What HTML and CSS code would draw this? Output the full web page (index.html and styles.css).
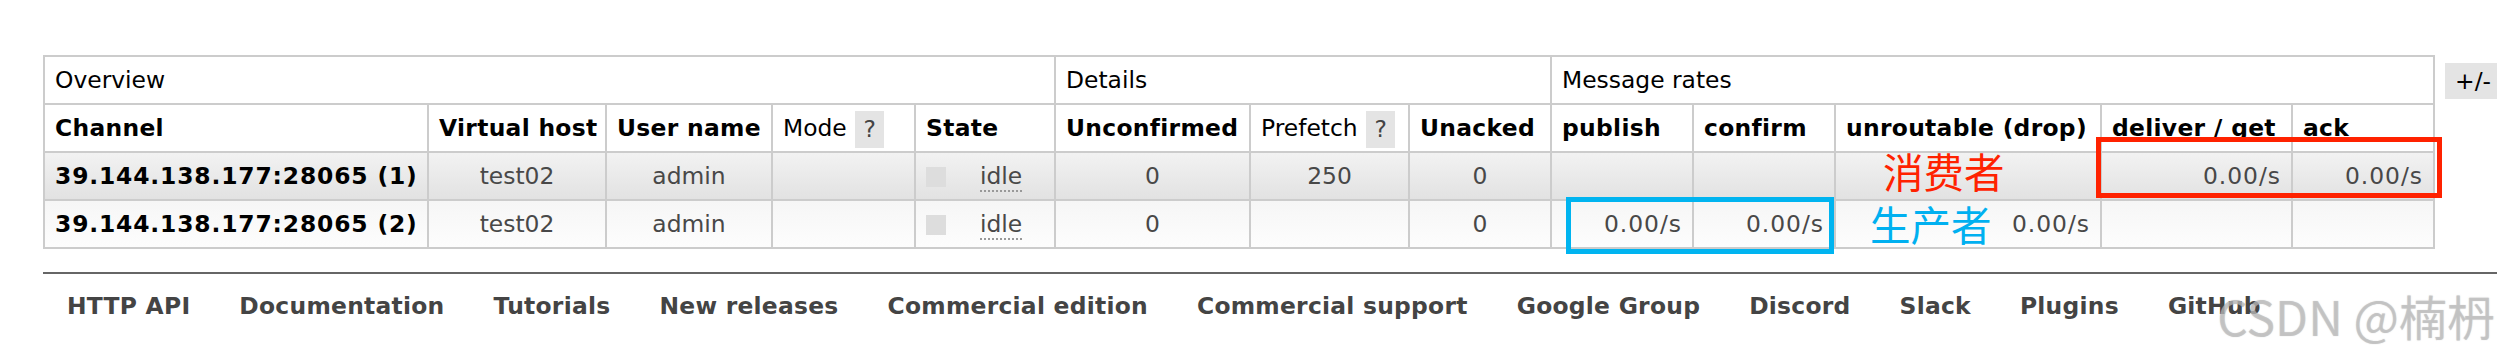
FILE: index.html
```html
<!DOCTYPE html>
<html lang="en">
<head>
    <meta charset="UTF-8">
    <meta name="viewport" content="width=device-width, initial-scale=1.0">
    <title>Channels - RabbitMQ Management</title>
    <link rel="stylesheet" href="styles.css">
</head>
<body>
<div class="page">
    <div class="channels">
        <table class="list">
            <colgroup>
                <col style="width: 384px">
                <col style="width: 178px">
                <col style="width: 166px">
                <col style="width: 143px">
                <col style="width: 140px">
                <col style="width: 195px">
                <col style="width: 159px">
                <col style="width: 142px">
                <col style="width: 142px">
                <col style="width: 142px">
                <col style="width: 266px">
                <col style="width: 191px">
                <col style="width: 142px">
            </colgroup>
            <thead>
                <tr class="group">
                    <th colspan="5">Overview</th>
                    <th colspan="3">Details</th>
                    <th colspan="5">Message rates</th>
                </tr>
                <tr>
                    <th>Channel</th>
                    <th>Virtual host</th>
                    <th>User name</th>
                    <th class="plain">Mode <span class="help">?</span></th>
                    <th>State</th>
                    <th>Unconfirmed</th>
                    <th class="plain">Prefetch <span class="help">?</span></th>
                    <th>Unacked</th>
                    <th>publish</th>
                    <th>confirm</th>
                    <th>unroutable (drop)</th>
                    <th>deliver / get</th>
                    <th>ack</th>
                </tr>
            </thead>
            <tbody>
                <tr class="alt1">
                    <td class="name">39.144.138.177:28065 (1)</td>
                    <td>test02</td>
                    <td>admin</td>
                    <td></td>
                    <td class="state"><span class="square"></span><abbr>idle</abbr></td>
                    <td>0</td>
                    <td>250</td>
                    <td>0</td>
                    <td class="rate"></td>
                    <td class="rate"></td>
                    <td class="rate"></td>
                    <td class="rate">0.00/s</td>
                    <td class="rate">0.00/s</td>
                </tr>
                <tr class="alt2">
                    <td class="name">39.144.138.177:28065 (2)</td>
                    <td>test02</td>
                    <td>admin</td>
                    <td></td>
                    <td class="state"><span class="square"></span><abbr>idle</abbr></td>
                    <td>0</td>
                    <td></td>
                    <td>0</td>
                    <td class="rate">0.00/s</td>
                    <td class="rate">0.00/s</td>
                    <td class="rate">0.00/s</td>
                    <td class="rate"></td>
                    <td class="rate"></td>
                </tr>
            </tbody>
        </table>
        <div class="plus-minus">+/-</div>
    </div>

    <div class="footer">
        <ul>
            <li><a href="#">HTTP API</a></li>
            <li><a href="#">Documentation</a></li>
            <li><a href="#">Tutorials</a></li>
            <li><a href="#">New releases</a></li>
            <li><a href="#">Commercial edition</a></li>
            <li><a href="#">Commercial support</a></li>
            <li><a href="#">Google Group</a></li>
            <li><a href="#">Discord</a></li>
            <li><a href="#">Slack</a></li>
            <li><a href="#">Plugins</a></li>
            <li><a href="#">GitHub</a></li>
        </ul>
    </div>

    <!-- annotations drawn over the screenshot -->
    <div class="mark red"></div>
    <div class="mark blue"></div>
    <div class="note consumer">消费者</div>
    <div class="note producer">生产者</div>
    <div class="watermark">CSDN @楠枬</div>
</div>
</body>
</html>
```

FILE: styles.css
```css
body {
    margin: 0;
    font-family: "DejaVu Sans", Verdana, sans-serif;
    font-size: 23.4px;
    color: #484848;
    background: #ffffff;
}
.page {
    position: relative;
    width: 2497px;
    height: 360px;
    padding-top: 55px;
    box-sizing: border-box;
    overflow: hidden;
}
.channels {
    display: flex;
    align-items: flex-start;
    gap: 10px;
    padding-left: 43px;
}
table.list {
    flex-shrink: 0;
    border-collapse: collapse;
    table-layout: fixed;
    width: 2392px;
}
table.list th,
table.list td {
    border: 2px solid #cccccc;
    padding: 9px 10px;
    line-height: 28px;
    white-space: nowrap;
}
table.list th {
    text-align: left;
    font-weight: bold;
    letter-spacing: 0.3px;
    color: #000000;
    background: #ffffff;
}
table.list tr.group th,
table.list th.plain {
    font-weight: normal;
    letter-spacing: 0;
}
table.list td {
    text-align: center;
}
table.list td.name {
    text-align: left;
    font-weight: bold;
    letter-spacing: 0.85px;
    color: #000000;
}
table.list td.rate {
    text-align: right;
    letter-spacing: 1px;
}
table.list td.state { text-align: left; }
table.list tr.alt1 td { background: linear-gradient(#f2f2f2, #e2e2e2); }
table.list tr.alt2 td { background: linear-gradient(#f6f6f6, #fdfdfd); }

.help {
    display: inline-block;
    width: 29px;
    height: 37px;
    line-height: 37px;
    margin: -6px 0 -6px 1px;
    vertical-align: middle;
    text-align: center;
    background: #e4e4e4;
    color: #444444;
}
.square {
    display: inline-block;
    width: 20px;
    height: 20px;
    background: #dddddd;
    vertical-align: -3px;
}
td.state abbr {
    margin-left: 34px;
    text-decoration: none;
    border-bottom: 2px dotted #999999;
}
.plus-minus {
    flex-shrink: 0;
    margin-top: 8px;
    padding: 0 10px;
    line-height: 36px;
    background: #e4e4e4;
    color: #000000;
}

.footer {
    margin: 23px 0 0 43px;
    border-top: 2px solid #666666;
    padding: 18px 0 0 24px;
}
.footer ul {
    display: flex;
    gap: 49px;
    list-style: none;
    margin: 0;
    padding: 0;
}
.footer a {
    color: #444444;
    font-weight: bold;
    letter-spacing: 0.26px;
    text-decoration: none;
    line-height: 28px;
}

.mark {
    position: absolute;
    box-sizing: border-box;
    border: 5px solid;
}
.mark.red {
    left: 2096px;
    top: 137px;
    width: 346px;
    height: 61px;
    border-color: #ff2200;
}
.mark.blue {
    left: 1566px;
    top: 197px;
    width: 268px;
    height: 57px;
    border-color: #00b4f0;
}
.note {
    position: absolute;
    font-family: "Noto Sans CJK SC", sans-serif;
    font-size: 40.5px;
    line-height: 1;
}
.note.consumer {
    left: 1883px;
    top: 151px;
    color: #ff2200;
}
.note.producer {
    left: 1870px;
    top: 204px;
    color: #00b0f0;
}
.watermark {
    position: absolute;
    right: 2px;
    top: 291px;
    font-family: "Noto Sans CJK SC", sans-serif;
    font-size: 48px;
    line-height: 1;
    color: rgba(190, 190, 190, 0.6);
    text-shadow: 0 0 1px rgba(150, 150, 150, 0.5);
}
```
